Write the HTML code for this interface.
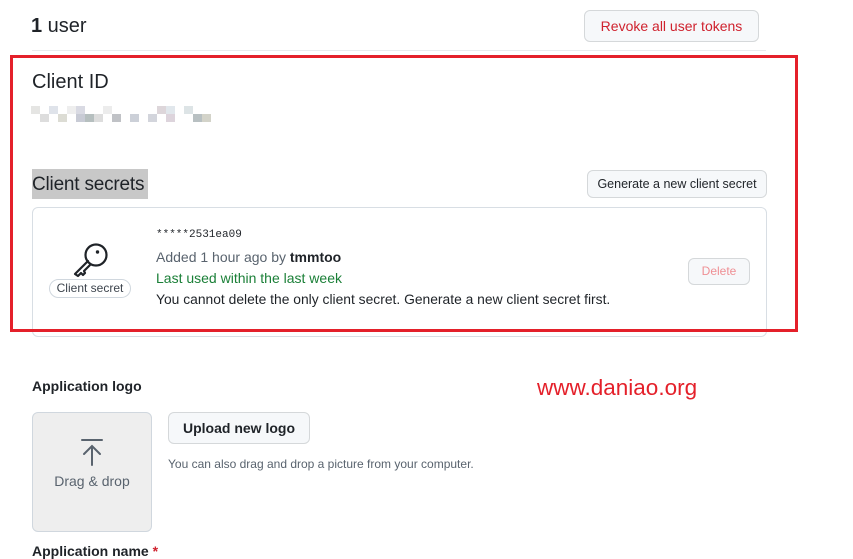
<!DOCTYPE html>
<html><head><style>
*{margin:0;padding:0;box-sizing:border-box}
body{width:853px;height:555px;background:#fff;font-family:"Liberation Sans",sans-serif;color:#1f2328;position:relative;overflow:hidden}
.a{position:absolute;white-space:nowrap}
.btn{position:absolute;border:1px solid #d5d8da;border-radius:6px;background:#f6f8fa;font-size:13px;text-align:center}
.px{position:absolute;width:9px;height:8px}
</style></head><body>
<div class="a" style="left:31px;top:15px;font-size:20px"><b style="font-weight:600">1</b> user</div>
<div class="btn" style="left:584px;top:10px;width:175px;height:32px;line-height:30px;color:#cf222e;font-size:14px">Revoke all user tokens</div>
<div class="a" style="left:32px;top:50px;width:734px;height:1px;background:#e8eaed"></div>
<div class="a" style="left:32px;top:207px;width:735px;height:130px;border:1px solid #d8dee4;border-radius:6px"></div>
<div class="a" style="left:10px;top:55px;width:788px;height:277px;border:3px solid #e4202a"></div>
<div class="a" style="left:32px;top:71px;font-size:20px">Client ID</div>
<div class="a" style="left:31px;top:106px;width:180px;height:16px">
<div class="px" style="left:0;top:0;background:#e5e5e3"></div><div class="px" style="left:18px;top:0;background:#dfe3ea"></div><div class="px" style="left:36px;top:0;background:#eee"></div><div class="px" style="left:45px;top:0;background:#d9dae3"></div><div class="px" style="left:72px;top:0;background:#ececec"></div><div class="px" style="left:126px;top:0;background:#ddd6da"></div><div class="px" style="left:135px;top:0;background:#e1e7ec"></div><div class="px" style="left:153px;top:0;background:#dde4e6"></div>
<div class="px" style="left:9px;top:8px;background:#ddd"></div><div class="px" style="left:27px;top:8px;background:#dcdcd4"></div><div class="px" style="left:45px;top:8px;background:#c8cbd5"></div><div class="px" style="left:54px;top:8px;background:#b6bfbf"></div><div class="px" style="left:63px;top:8px;background:#ddd"></div><div class="px" style="left:81px;top:8px;background:#c0c2c6"></div><div class="px" style="left:99px;top:8px;background:#ccd0d8"></div><div class="px" style="left:117px;top:8px;background:#d3d5dc"></div><div class="px" style="left:135px;top:8px;background:#ddd4dc"></div><div class="px" style="left:162px;top:8px;background:#b8c0c2"></div><div class="px" style="left:171px;top:8px;background:#d3d3c9"></div>
</div>
<div class="a" style="left:32px;top:169px;width:116px;height:30px;background:#c8c8c8"></div>
<div class="a" style="left:32px;top:174px;font-size:19px;letter-spacing:-0.2px">Client secrets</div>
<div class="btn" style="left:587px;top:170px;width:180px;height:28px;line-height:26px;color:#1f2328;font-size:12.5px">Generate a new client secret</div>
<svg class="a" style="left:72px;top:242px" width="36" height="36" viewBox="0 0 36 36" fill="none" stroke="#1f2328" stroke-width="2.2" stroke-linecap="round" stroke-linejoin="round"><path d="M16 19 L3 32 L6 34 L9 31 L11 33 L13 31 L12 29 L18 23"/><circle cx="24" cy="13" r="10.5"/><circle cx="25.5" cy="10" r="1.7" fill="#1f2328" stroke="none"/></svg>
<div class="a" style="left:49px;top:279px;width:82px;height:19px;border:1px solid #d0d7de;border-radius:10px;font-size:12px;line-height:17px;text-align:center;color:#3d444d">Client secret</div>
<div class="a" style="left:156px;top:229px;font-family:'Liberation Mono',monospace;font-size:11px">*****2531ea09</div>
<div class="a" style="left:156px;top:249px;font-size:14px;color:#59636e">Added 1 hour ago by <b style="color:#1f2328">tmmtoo</b></div>
<div class="a" style="left:156px;top:270px;font-size:14px;color:#1a7f37">Last used within the last week</div>
<div class="a" style="left:156px;top:291px;font-size:13.85px">You cannot delete the only client secret. Generate a new client secret first.</div>
<div class="btn" style="left:688px;top:258px;width:62px;height:27px;line-height:25px;color:#ef8f94;font-size:12px">Delete</div>
<div class="a" style="left:32px;top:378px;font-size:14px;font-weight:bold">Application logo</div>
<div class="a" style="left:32px;top:412px;width:120px;height:120px;background:#eeeeee;border:1px solid #d0d7de;border-radius:6px"></div>
<svg class="a" style="left:80px;top:438px" width="24" height="28" viewBox="0 0 24 28" stroke="#59636e" stroke-width="2" fill="none" stroke-linecap="round"><path d="M2 2H22M12 8V27M4 16L12 8L20 16"/></svg>
<div class="a" style="left:32px;top:473px;width:120px;text-align:center;font-size:14px;color:#59636e">Drag &amp; drop</div>
<div class="btn" style="left:168px;top:412px;width:142px;height:32px;line-height:30px;font-size:14px;font-weight:bold">Upload new logo</div>
<div class="a" style="left:168px;top:457px;font-size:12px;color:#59636e">You can also drag and drop a picture from your computer.</div>
<div class="a" style="left:537px;top:375px;font-size:22.5px;color:#e4202a">www.daniao.org</div>
<div class="a" style="left:32px;top:543px;font-size:14px;font-weight:bold">Application name <span style="color:#cf222e">*</span></div>
</body></html>
